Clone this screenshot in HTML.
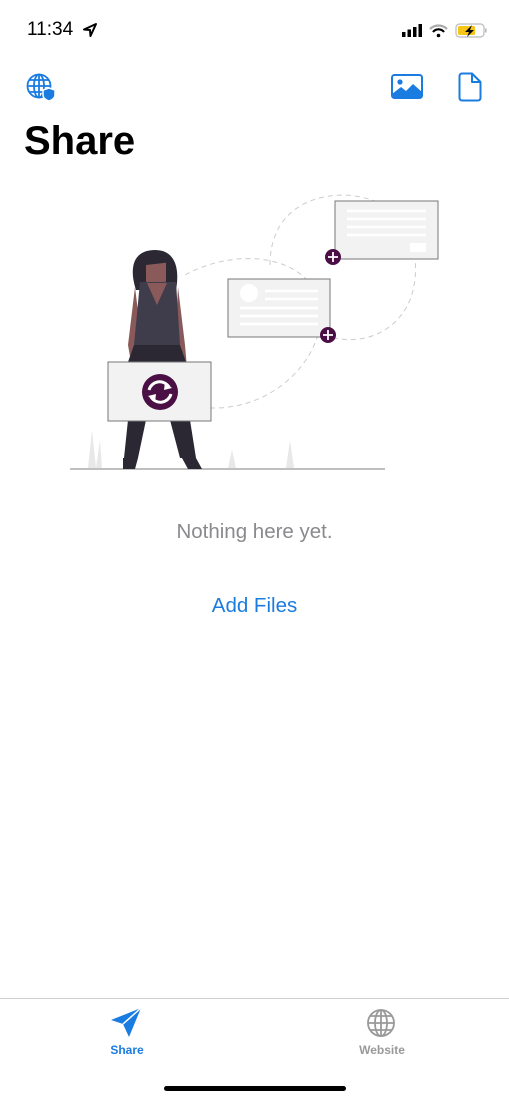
<!DOCTYPE html>
<html><head><meta charset="utf-8"><style>
html,body{margin:0;padding:0;background:#fff;width:509px;height:1102px;overflow:hidden;font-family:"Liberation Sans",sans-serif;position:relative}
.a{position:absolute}
</style></head><body>
<div class="a" style="left:27px;top:19px;font-size:19px;font-weight:500;color:#000">11:34</div>
<svg class="a" style="left:82px;top:22px" width="16" height="16" viewBox="0 0 16 16"><path d="M14 2 L2 7.5 L8 8 L8.5 14 Z" fill="none" stroke="#000" stroke-width="2" stroke-linejoin="round"/></svg>
<svg class="a" style="left:400px;top:22px" width="90" height="18" viewBox="0 0 90 18">
<rect x="2" y="10" width="3.5" height="5" fill="#000"/><rect x="7.5" y="7.5" width="3.5" height="7.5" fill="#000"/><rect x="13" y="5" width="3.5" height="10" fill="#000"/><rect x="18.5" y="2" width="3.5" height="13" fill="#000"/>
<path d="M30 7 A12 12 0 0 1 47 7" stroke="#aaa" stroke-width="2.2" fill="none"/><path d="M33 10 A7 7 0 0 1 44 10" stroke="#000" stroke-width="2.2" fill="none"/><circle cx="38.5" cy="13.5" r="1.8" fill="#000"/>
<rect x="56" y="2" width="28" height="13" rx="3.5" fill="none" stroke="#bbb" stroke-width="1.2"/><rect x="58" y="4" width="17" height="9" rx="1.5" fill="#f5c518"/><rect x="85" y="6.5" width="1.6" height="4" fill="#bbb"/>
<path d="M72 3 L65 10 L69 10 L67 15 L74 8 L70 8 Z" fill="#000"/></svg>
<svg class="a" style="left:26px;top:72px" width="32" height="30" viewBox="0 0 32 30" fill="none" stroke="#1a7ce0" stroke-width="1.8">
<circle cx="13" cy="14" r="11.5"/><ellipse cx="13" cy="14" rx="5" ry="11.5"/><path d="M1.5 14h23M3.5 8h19M3.5 20h14M13 2.5v23"/>
<path d="M23 16 l6 2 v5 c0 3-3 5-6 6 c-3-1-6-3-6-6 v-5 Z" fill="#1a7ce0" stroke="#fff" stroke-width="1.5"/></svg>
<svg class="a" style="left:391px;top:74px" width="32" height="25" viewBox="0 0 32 25"><rect x="1" y="1" width="30" height="23" rx="2.5" fill="none" stroke="#1a7ce0" stroke-width="2"/><circle cx="9" cy="8" r="2.6" fill="#1a7ce0"/><path d="M1 20 L10 13 L15 17 L22 10 L31 18 V24 H1 Z" fill="#1a7ce0"/></svg>
<svg class="a" style="left:458px;top:72px" width="24" height="30" viewBox="0 0 24 30"><path d="M4 1.5 H14 L22.5 10 V26 A2.5 2.5 0 0 1 20 28.5 H4 A2.5 2.5 0 0 1 1.5 26 V4 A2.5 2.5 0 0 1 4 1.5 Z M14 1.5 V10 H22.5" fill="none" stroke="#1a7ce0" stroke-width="2" stroke-linejoin="round"/></svg>
<div class="a" style="left:24px;top:119px;font-size:40px;font-weight:700;color:#000">Share</div>
<svg class="a" style="left:0;top:0" width="509" height="480" viewBox="0 0 509 480">
<g fill="none" stroke="#ccc" stroke-width="1" stroke-dasharray="5 4">
<path d="M210 408 C280 410 330 350 320 300 C300 250 230 250 185 275"/>
<path d="M270 265 C270 200 330 190 360 197 C410 205 425 260 410 300 C395 335 360 345 330 337"/>
</g>
<rect x="335" y="201" width="103" height="58" fill="#f2f2f2" stroke="#777" stroke-width="1"/>
<g stroke="#fff" stroke-width="2.5"><path d="M347 211h79M347 219h79M347 227h79M347 235h79"/></g><rect x="410" y="243" width="16" height="9" fill="#fff"/>
<rect x="228" y="279" width="102" height="58" fill="#f2f2f2" stroke="#777" stroke-width="1"/>
<circle cx="249" cy="293" r="9" fill="#fff"/><g stroke="#fff" stroke-width="2.5"><path d="M265 291h53M265 299h53M240 308h78M240 316h78M240 324h78"/></g>
<g><circle cx="333" cy="257" r="8" fill="#4a0f45"/><path d="M328 257h10M333 252v10" stroke="#fff" stroke-width="1.8"/>
<circle cx="328" cy="335" r="8" fill="#4a0f45"/><path d="M323 335h10M328 330v10" stroke="#fff" stroke-width="1.8"/></g>
<g fill="#e8e8e8"><path d="M88 468 L92 430 L96 468 L100 440 L102 468Z"/><path d="M228 468 L232 450 L236 468Z"/><path d="M286 468 L290 440 L294 468Z"/></g>
<path d="M70 469 H385" stroke="#999" stroke-width="1.2"/>
<path d="M136 290 C128 265 135 250 155 250 C175 250 180 268 176 290 Z" fill="#2b2834"/>
<rect x="146" y="258" width="20" height="28" rx="6" fill="#8a5a5a"/>
<path d="M143 258 C148 250 168 250 172 262 L146 265Z" fill="#2b2834"/>
<path d="M135 287 L128 345 L132 368 L138 368 L142 345Z M178 287 L185 345 L187 368 L181 368 L175 345Z" fill="#8a5a5a"/>
<path d="M140 282 L176 282 L180 345 L134 345 Z" fill="#3f3c4c"/>
<path d="M147 283 L157 305 L167 283Z" fill="#8a5a5a"/>
<path d="M134 345 H180 L186 362 H128Z" fill="#2b2834"/>
<path d="M128 420 L124 458 L138 458 L146 420Z M170 420 L180 458 L196 458 L190 420Z" fill="#2b2834"/>
<path d="M123 458 h15 l-3 11 h-12Z M182 458 h14 l6 11 h-14Z" fill="#2b2834"/>
<rect x="108" y="362" width="103" height="59" fill="#f2f2f2" stroke="#777" stroke-width="1"/>
<circle cx="160" cy="392" r="18" fill="#4a0f45"/>
<g fill="none" stroke="#fff" stroke-width="3"><path d="M149 390 A11 11 0 0 1 169 387"/><path d="M171 394 A11 11 0 0 1 151 397"/></g>
<path d="M165 382 L172 388 L164 390Z M155 402 L148 396 L156 394Z" fill="#fff"/>
</svg>
<div class="a" style="left:0;width:509px;top:520px;text-align:center;font-size:20.5px;color:#8a8a8e">Nothing here yet.</div>
<div class="a" style="left:0;width:509px;top:594px;text-align:center;font-size:20.5px;color:#1a7ce0">Add Files</div>
<div class="a" style="left:0;top:998px;width:509px;height:1px;background:#d0d0d0"></div>
<svg class="a" style="left:109px;top:1007px" width="34" height="32" viewBox="0 0 34 32"><path d="M32 1 L2 13 L14 17 L20 30 Z" fill="#1a7ce0"/><path d="M32 1 L14 17" stroke="#fff" stroke-width="1.5"/></svg>
<div class="a" style="left:100px;width:54px;top:1043px;text-align:center;font-size:12px;font-weight:600;color:#1a7ce0">Share</div>
<svg class="a" style="left:366px;top:1008px" width="30" height="30" viewBox="0 0 30 30" fill="none" stroke="#999" stroke-width="1.8"><circle cx="15" cy="15" r="13"/><ellipse cx="15" cy="15" rx="6" ry="13"/><path d="M2 15h26M4 8h22M4 22h22M15 2v26"/></svg>
<div class="a" style="left:346px;width:72px;top:1043px;text-align:center;font-size:12px;font-weight:600;color:#999">Website</div>
<div class="a" style="left:164px;top:1086px;width:182px;height:5px;border-radius:3px;background:#000"></div>
</body></html>
